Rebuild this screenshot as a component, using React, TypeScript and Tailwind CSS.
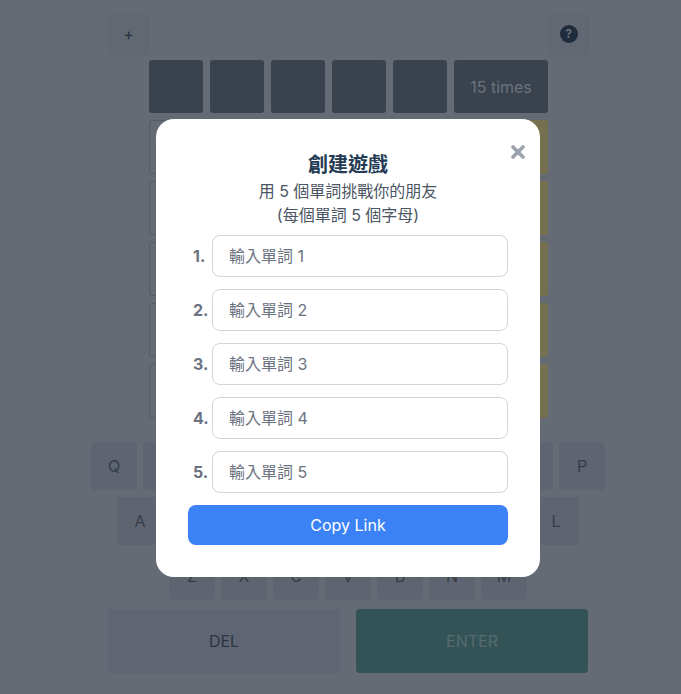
import { X } from 'lucide-react'

const rows = [0, 1, 2, 3, 4]
const cells = [0, 1, 2, 3, 4]
const words = [1, 2, 3, 4, 5]

const keyRows = [
  ['Q', 'W', 'E', 'R', 'T', 'Y', 'U', 'I', 'O', 'P'],
  ['A', 'S', 'D', 'F', 'G', 'H', 'J', 'K', 'L'],
  ['Z', 'X', 'C', 'V', 'B', 'N', 'M'],
]

function Key({ label }: { label: string }) {
  return (
    <div className="flex h-[48px] w-[46px] items-center justify-center rounded-[4px] bg-[#5e6570] text-base text-[#343c48]">
      {label}
    </div>
  )
}

export default function App() {
  return (
    <div className="relative h-[694px] w-[681px] overflow-hidden bg-[#656b75] font-['Inter','Noto_Sans_CJK_TC',sans-serif]">
      <div className="flex flex-col items-center pl-[16px] pt-[13px]">
        <div className="flex w-[483px] justify-between">
          <button type="button" className="flex h-[42px] w-[43px] items-center justify-center rounded-[6px] bg-[#626872] text-base text-[#2a323e]">
            +
          </button>
          <button type="button" className="flex h-[42px] w-[43px] items-center justify-center rounded-[6px] bg-[#626872]">
            <span className="flex size-[18px] items-center justify-center rounded-full bg-[#1e2c3c] text-[12px] font-bold text-[#656b75]">
              ?
            </span>
          </button>
        </div>

        <div className="mt-[5px] flex flex-col gap-[7px]">
          <div className="flex gap-[7px]">
            {cells.map((c) => (
              <div key={c} className="h-[53px] w-[54px] rounded-[3px] bg-[#3a424d]" />
            ))}
            <div className="flex h-[53px] w-[94px] items-center justify-center rounded-[3px] bg-[#3a424d] text-base text-[#6c727c]">
              15 times
            </div>
          </div>
          {rows.map((r) => (
            <div key={r} className="flex gap-[7px]">
              {cells.map((c) => (
                <div key={c} className="h-[54px] w-[54px] rounded-[3px] border border-[#555c67]" />
              ))}
              <div className="h-[54px] w-[94px] rounded-[3px] bg-[#75704f]" />
            </div>
          ))}
        </div>

        <div className="mr-[1px] mt-[24px] flex flex-col items-center gap-[7px]">
          {keyRows.map((row) => (
            <div key={row[0]} className="flex gap-[6px]">
              {row.map((k) => (
                <Key key={k} label={k} />
              ))}
            </div>
          ))}
        </div>

        <div className="mr-[1px] mt-[9px] flex gap-[16px]">
          <div className="flex h-[64px] w-[232px] items-center justify-center rounded-[4px] bg-[#5f6573] text-base text-[#2d3541]">
            DEL
          </div>
          <div className="flex h-[64px] w-[232px] items-center justify-center rounded-[4px] bg-[#345356] text-base text-[#566a6d]">
            ENTER
          </div>
        </div>
      </div>

      <div className="absolute inset-0 flex items-center justify-center pl-[15px] pt-[2px]">
        <div className="relative w-[384px] rounded-[18px] bg-white p-[32px]">
          <button type="button" className="absolute right-[12px] top-[23px] text-[#9ca3af]">
            <X className="size-[20px]" strokeWidth={4.5} />
          </button>
          <h2 className="text-center text-[20px] font-bold leading-[28px] text-[#243b53]">創建遊戲</h2>
          <p className="text-center text-base leading-[24px] text-[#4b5563]">用 5 個單詞挑戰你的朋友</p>
          <p className="text-center text-base leading-[24px] text-[#4b5563]">(每個單詞 5 個字母)</p>
          <div className="mt-[8px] flex flex-col gap-[12px]">
            {words.map((n) => (
              <div key={n} className="flex items-center">
                <span className="w-[24px] pl-[5px] text-base font-bold text-[#6b7280]">{n}.</span>
                <input
                  readOnly
                  placeholder={`輸入單詞 ${n}`}
                  className="h-[42px] flex-1 rounded-[8px] border border-[#d1d5db] bg-white px-[16px] text-base placeholder:text-[#6b7280]"
                />
              </div>
            ))}
          </div>
          <button type="button" className="mt-[12px] h-[40px] w-full rounded-[8px] bg-[#3b82f6] text-base text-white">
            Copy Link
          </button>
        </div>
      </div>
    </div>
  )
}
